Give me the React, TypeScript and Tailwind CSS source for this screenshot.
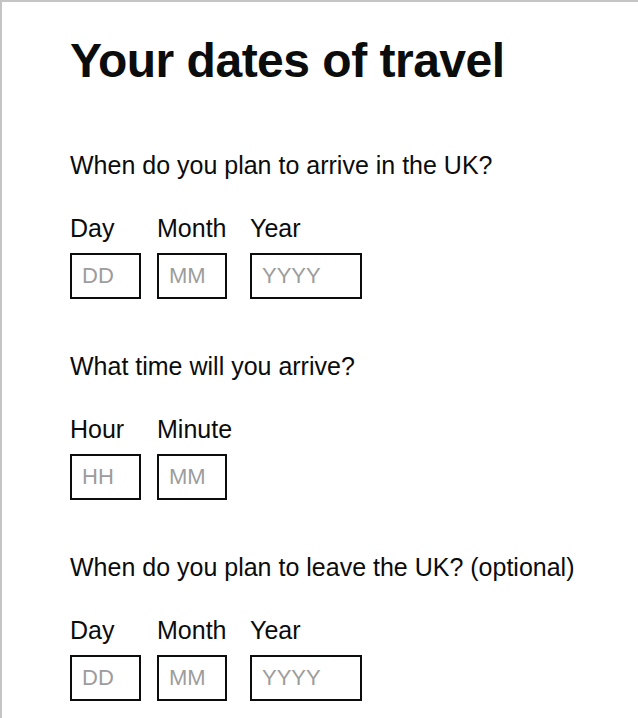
import React from 'react';

type Field = { label: string; placeholder: string; itemW: string; inputW: string };

const dateFields: Field[] = [
  { label: 'Day', placeholder: 'DD', itemW: 'w-[71px]', inputW: 'w-[71px]' },
  { label: 'Month', placeholder: 'MM', itemW: 'w-[77px]', inputW: 'w-[70px]' },
  { label: 'Year', placeholder: 'YYYY', itemW: 'w-[112px]', inputW: 'w-[112px]' },
];

const timeFields: Field[] = [
  { label: 'Hour', placeholder: 'HH', itemW: 'w-[71px]', inputW: 'w-[71px]' },
  { label: 'Minute', placeholder: 'MM', itemW: 'w-[77px]', inputW: 'w-[70px]' },
];

const FieldGroup = ({ question, fields, id }: { question: string; fields: Field[]; id: string }) => (
  <fieldset className="mb-[52px]">
    <legend className="text-[25px] leading-[30px] mb-[33px] text-[#0b0c0c]">{question}</legend>
    <div className="flex gap-4">
      {fields.map((f) => (
        <div key={f.label} className={`${f.itemW} flex flex-col`}>
          <label htmlFor={`${id}-${f.label}`} className="text-[25px] leading-[30px] mb-[10px] text-[#0b0c0c]">
            {f.label}
          </label>
          <input
            id={`${id}-${f.label}`}
            type="text"
            placeholder={f.placeholder}
            className={`${f.inputW} h-[46px] border-2 border-[#0b0c0c] px-[10px] text-[22px] text-[#0b0c0c] placeholder:text-[#9c9c9c] outline-none`}
          />
        </div>
      ))}
    </div>
  </fieldset>
);

export default function App() {
  return (
    <div
      className="min-h-[718px] w-[638px] bg-white border-t-2 border-l-2 border-[#c4c4c4] pt-[35px] pl-[68px] overflow-hidden"
      style={{ fontFamily: '"Liberation Sans", Arial, sans-serif' }}
    >
      <h1 className="text-[48px] leading-[48px] font-bold tracking-[-0.5px] text-[#0b0c0c] mb-[65px]">
        Your dates of travel
      </h1>
      <form>
        <FieldGroup id="arrive" question="When do you plan to arrive in the UK?" fields={dateFields} />
        <FieldGroup id="time" question="What time will you arrive?" fields={timeFields} />
        <FieldGroup id="leave" question="When do you plan to leave the UK? (optional)" fields={dateFields} />
      </form>
    </div>
  );
}
